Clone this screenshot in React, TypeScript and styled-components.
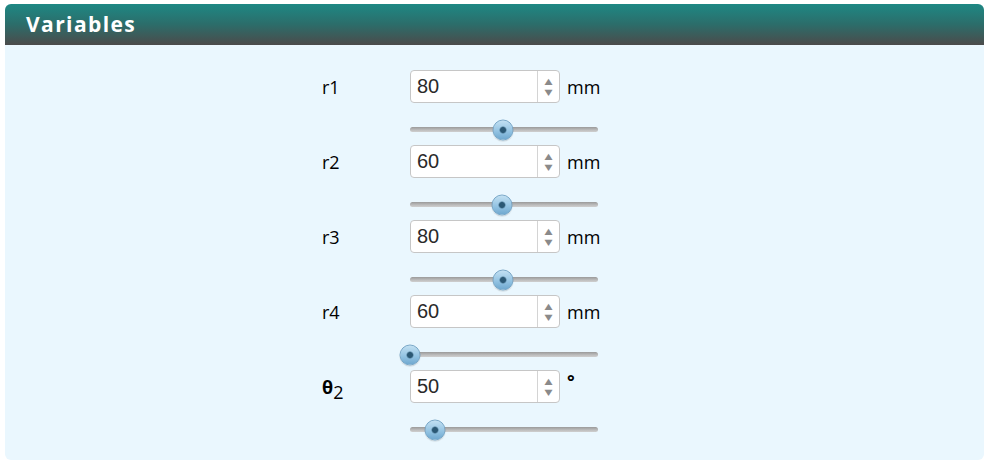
import React from 'react'
import styled, { createGlobalStyle } from 'styled-components'

type VariableType = {
    id: string;
    symbol: string;
    sub?: string;
    value: number;
    unit: string;
    min: number;
    max: number;
}

const variables: VariableType[] = [
    { id: 'r1', symbol: 'r1', value: 80, unit: 'mm', min: 0, max: 162 },
    { id: 'r2', symbol: 'r2', value: 60, unit: 'mm', min: 0, max: 122 },
    { id: 'r3', symbol: 'r3', value: 80, unit: 'mm', min: 0, max: 162 },
    { id: 'r4', symbol: 'r4', value: 60, unit: 'mm', min: 60, max: 200 },
    { id: 'theta2', symbol: 'θ', sub: '2', value: 50, unit: '°', min: 0, max: 375 },
]

export default function App() {
  return (
    <>
      <GlobalStyle />
      <Panel>
        <Header>Variables</Header>
        <Body>
          {variables.map((v) => {
            const pct = ((v.value - v.min) / (v.max - v.min)) * 100
            return (
              <Variable key={v.id}>
                <InputRow>
                    <Label>
                        {v.sub ? <Greek>{v.symbol}<sub>{v.sub}</sub></Greek> : v.symbol}
                    </Label>
                    <NumberBox>
                        <NumberInput defaultValue={v.value} readOnly />
                        <Spinner>
                            <SpinButton>▲</SpinButton>
                            <SpinButton>▼</SpinButton>
                        </Spinner>
                    </NumberBox>
                    <Unit $degree={v.unit === '°'}>{v.unit}</Unit>
                </InputRow>
                <SliderRow>
                    <Track>
                        <Thumb style={{ left: `${pct}%` }} />
                    </Track>
                </SliderRow>
              </Variable>
            )
          })}
        </Body>
      </Panel>
    </>
  )
}

const GlobalStyle = createGlobalStyle`
    body {
        margin: 0;
        background: #ffffff;
        font-family: "Open Sans", "DejaVu Sans", sans-serif;
    }
`

const Panel = styled.div`
    margin: 4px 0 0 5px;
    width: 979px;
    height: 456px;
    background-color: #eaf7fe;
    border-radius: 6px;
    overflow: hidden;
    display: flex;
    flex-direction: column;
`

const Header = styled.div`
    height: 41px;
    flex-shrink: 0;
    background: linear-gradient(to bottom, #1e8884 0%, #2c6d6a 50%, #4b4b4b 100%);
    color: #ffffff;
    font-family: "Open Sans", sans-serif;
    font-weight: 700;
    font-size: 21px;
    letter-spacing: 1.4px;
    line-height: 40px;
    padding-left: 21px;
`

const Body = styled.div`
    padding: 25px 0 0 317px;
    display: flex;
    flex-direction: column;
`

const Variable = styled.div`
    display: flex;
    flex-direction: column;
    height: 75px;
`

const InputRow = styled.div`
    display: flex;
    align-items: center;
    height: 33px;
`

const Label = styled.div`
    width: 88px;
    font-size: 18px;
    color: #000;
`

const Greek = styled.span`
    font-weight: 700;

    sub {
        font-weight: 400;
        font-size: 18px;
        vertical-align: -5px;
        line-height: 0;
    }
`

const NumberBox = styled.div`
    display: flex;
    width: 148px;
    height: 31px;
    background: #ffffff;
    border: 1px solid #c6c6c6;
    border-radius: 4px;
`

const NumberInput = styled.input`
    flex: 1;
    min-width: 0;
    border: none;
    outline: none;
    background: transparent;
    padding: 0 0 0 6px;
    font-family: "Liberation Sans", Arial, sans-serif;
    font-size: 20px;
    color: #2a2a2a;
`

const Spinner = styled.div`
    width: 21px;
    border-left: 1px solid #d4d4d4;
    display: flex;
    flex-direction: column;
    justify-content: center;
    gap: 3px;
`

const SpinButton = styled.span`
    font-size: 8px;
    line-height: 8px;
    color: #8a8a8a;
    text-align: center;
    transform: scaleX(1.3);
`

const Unit = styled.div<{ $degree?: boolean }>`
    margin-left: 7px;
    font-size: 18px;
    color: #000;
    align-self: ${(p) => (p.$degree ? 'flex-start' : 'center')};
    margin-top: ${(p) => (p.$degree ? '-1px' : '0')};
    font-weight: ${(p) => (p.$degree ? 700 : 400)};
`

const SliderRow = styled.div`
    padding: 24px 0 0 88px;
`

const Track = styled.div`
    position: relative;
    width: 188px;
    height: 5px;
    border-radius: 3px;
    background: linear-gradient(to bottom, #9a9a9a 0%, #bdbdbd 60%, #cfcfcf 100%);
`

const Thumb = styled.div`
    position: absolute;
    top: 50%;
    width: 19px;
    height: 19px;
    border-radius: 50%;
    transform: translate(-50%, -50%);
    background: radial-gradient(circle at center, #2b5874 0, #2b5874 2.5px, rgba(43, 88, 116, 0) 4px),
        linear-gradient(to bottom, #c2e0f2 0%, #94c4e3 55%, #6fa8cf 100%);
    border: 1px solid #7aa8c8;
    box-shadow: 0 1px 1px rgba(0, 0, 0, 0.15);
`
